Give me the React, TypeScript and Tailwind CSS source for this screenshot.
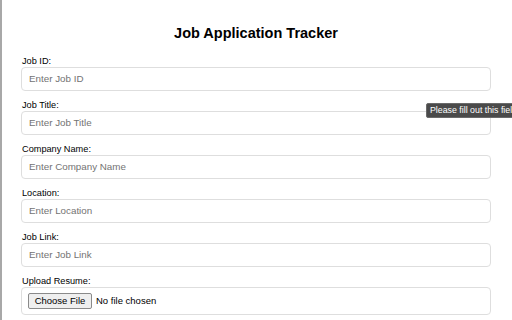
const fields = [
  { label: "Job ID:", placeholder: "Enter Job ID" },
  { label: "Job Title:", placeholder: "Enter Job Title" },
  { label: "Company Name:", placeholder: "Enter Company Name" },
  { label: "Location:", placeholder: "Enter Location" },
  { label: "Job Link:", placeholder: "Enter Job Link" },
];

export default function App() {
  return (
    <div
      className="relative h-[320px] w-[512px] overflow-hidden border-l-2 border-[#a8a8a8] bg-white"
      style={{ fontFamily: '"Liberation Sans", Arial, sans-serif' }}
    >
      <div className="pl-[19px] pr-[21px]">
        <h1 className="pt-[25px] pb-[13px] text-center text-[14.5px] font-bold leading-[17px] text-black">
          Job Application Tracker
        </h1>

        {fields.map((f) => (
          <div key={f.label} className="mb-[8px]">
            <div className="pl-[1px] text-[9.2px] leading-[12px] text-black">{f.label}</div>
            <div className="flex h-[24px] items-center rounded-[4px] border border-[#dedede] pl-[7px] text-[9.8px] text-[#737373]">
              {f.placeholder}
            </div>
          </div>
        ))}

        <div>
          <div className="pl-[1px] text-[9.2px] leading-[12px] text-black">Upload Resume:</div>
          <div className="flex h-[28px] items-center gap-[4px] rounded-[4px] border border-[#dedede] pl-[6px] text-[9.5px] text-black">
            <span className="flex h-[16px] w-[64px] items-center justify-center rounded-[2px] border border-[#8a8a8a] bg-[#efefef]">
              Choose File
            </span>
            <span>No file chosen</span>
          </div>
        </div>
      </div>

      <div className="absolute left-[424px] top-[103px] flex h-[15px] items-center whitespace-nowrap rounded-[2px] border border-[#6a6a6a] bg-[#4a4a4a] pl-[3px] text-[8.8px] text-white">
        Please fill out this field
      </div>
    </div>
  );
}
